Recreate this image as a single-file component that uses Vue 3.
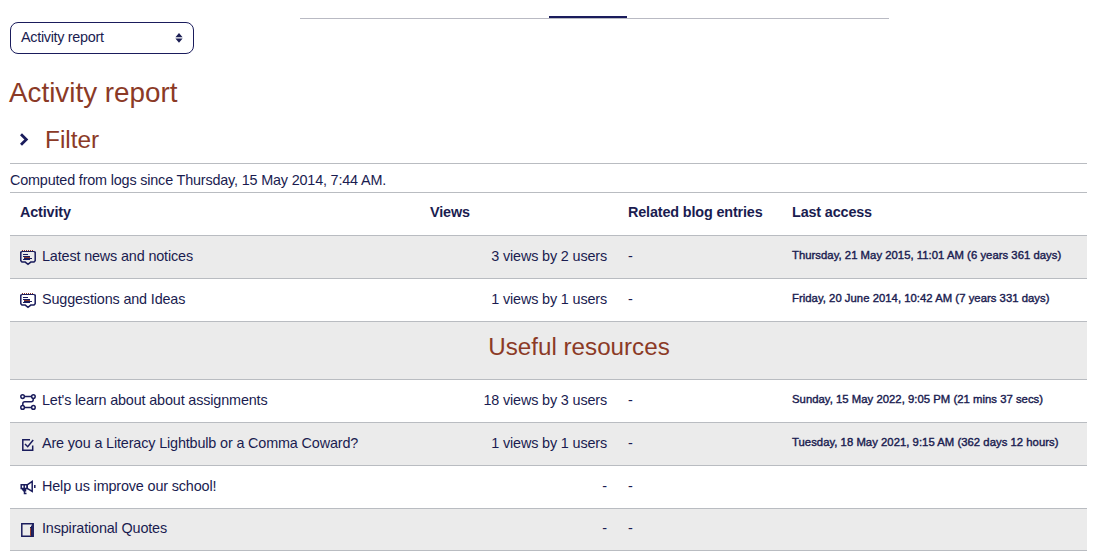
<script setup>
const rows = [
  { icon: 'forum', name: 'Latest news and notices', views: '3 views by 2 users', last: 'Thursday, 21 May 2015, 11:01 AM (6 years 361 days)' },
  { icon: 'forum', name: 'Suggestions and Ideas', views: '1 views by 1 users', last: 'Friday, 20 June 2014, 10:42 AM (7 years 331 days)' },
  { section: 'Useful resources' },
  { icon: 'path', name: "Let's learn about about assignments", views: '18 views by 3 users', last: 'Sunday, 15 May 2022, 9:05 PM (21 mins 37 secs)' },
  { icon: 'check', name: 'Are you a Literacy Lightbulb or a Comma Coward?', views: '1 views by 1 users', last: 'Tuesday, 18 May 2021, 9:15 AM (362 days 12 hours)' },
  { icon: 'horn', name: 'Help us improve our school!', views: '-', last: '' },
  { icon: 'book', name: 'Inspirational Quotes', views: '-', last: '' },
]
</script>

<template>
  <main class="page">
    <div class="tabs"><span class="active"></span></div>
    <div class="select">
      <span>Activity report</span>
      <svg width="8" height="10" viewBox="0 0 8 10"><path d="M4 0 7.6 4.3H.4zM.4 5.4h7.2L4 9.7z" fill="#1d2055" /></svg>
    </div>
    <h2>Activity report</h2>
    <div class="filter">
      <svg width="10" height="13" viewBox="0 0 10 13"><path d="M2 1.2 7.3 6.5 2 11.8" fill="none" stroke="#1a1c5c" stroke-width="2.8" /></svg>
      <h3>Filter</h3>
    </div>
    <p class="computed">Computed from logs since Thursday, 15 May 2014, 7:44 AM.</p>
    <table>
      <colgroup><col class="c1"><col class="c2"><col class="c3"><col class="c4"></colgroup>
      <thead>
        <tr><th>Activity</th><th>Views</th><th>Related blog entries</th><th>Last access</th></tr>
      </thead>
      <tbody>
        <tr v-for="(r, i) in rows" :key="i" :class="{ section: r.section, gray: i % 2 === 0, last: i === rows.length - 1 }">
          <td v-if="r.section" colspan="4"><h3>{{ r.section }}</h3></td>
          <template v-else>
            <td>
              <div class="activity">
                <svg class="icon" width="16" height="16" viewBox="0 0 16 16" fill="none" stroke="#1a1c5c" stroke-width="1.5">
                  <template v-if="r.icon === 'forum'">
                    <path d="M2 1.5h12" stroke-width="1" />
                    <path d="M1.8 1.4.8 2.4v8.3l1.2 1.4h3.2L8 14.3l2.8-2.2H14l1.2-1.4V2.4l-1-1" />
                    <path d="M2 .5h12" stroke="#8d3b2a" stroke-width="1" stroke-dasharray="1 1" />
                    <path d="M3 4.5h5M3 6.5h7M4 8.5h8M3 9.5h7" stroke-width="1" />
                    <path d="M4 7.5h6" stroke="#8d3b2a" stroke-width="1" />
                  </template>
                  <template v-else-if="r.icon === 'path'">
                    <circle cx="2.6" cy="2.6" r="1.8" /><circle cx="13.4" cy="2.6" r="1.8" />
                    <circle cx="2.6" cy="13.4" r="1.8" /><circle cx="13.4" cy="13.4" r="1.8" />
                    <path d="M4.5 2.5h7M13.2 4.4v1.3q0 2-2 2H4.8q-2 0-2 2v1.9M4.5 13.4h7" />
                  </template>
                  <template v-else-if="r.icon === 'check'">
                    <path d="M10 2.8H2.8v10.5h9.9V8.5M5 7l2.7 2.7L13.2 3" />
                  </template>
                  <template v-else-if="r.icon === 'horn'">
                    <path d="M7.2 4.9 12.2 1.5v10L7.2 8.4zM14.8 5v3M2.5 9.2h3v1.6H3.6zM4.5 11v2.4h2" />
                    <path d="M1.2 4.8h6v3.6h-6zM4.2 4.8v3.6" />
                  </template>
                  <template v-else>
                    <path d="M1.8 1.7h11.4v12.6H1.8zM12.8 2v12" />
                    <path d="M11.5 3.5v10.5M10.5 5v2" stroke-width="1" /><path d="M10.5 6v8" stroke="#9a442f" stroke-width="1" />
                  </template>
                </svg>
                <a>{{ r.name }}</a>
              </div>
            </td>
            <td class="views">{{ r.views }}</td>
            <td>-</td>
            <td class="date">{{ r.last }}</td>
          </template>
        </tr>
      </tbody>
    </table>
  </main>
</template>

<style>
body { background: #fff; overflow: hidden; }
</style>

<style scoped>
.page { box-sizing: border-box; width: 1096px; height: 553px; padding: 16px 9px 0 10px; font: 14.4px/20px "Liberation Sans", Arial, sans-serif; color: #1a1c50; background: #fff; }
.tabs { width: 589px; height: 2px; margin-left: 290px; border-bottom: 1px solid #b9bac3; }
.active { display: block; width: 78px; height: 2px; margin-left: 249px; background: #1a1c5c; }
.select { box-sizing: border-box; display: flex; align-items: center; justify-content: space-between; width: 184px; height: 32px; margin-top: 3px; padding: 0 10px 2px 10px; border: 1px solid #1a1c5c; border-radius: 8px; letter-spacing: -.3px; }
.select svg { margin-top: 2px; }
h2, h3 { margin: 0; font-weight: 400; color: #8b3a26; }
h2 { height: 33px; margin: 22px 0 0 -1px; font-size: 27.8px; line-height: 34px; }
.filter { box-sizing: border-box; display: flex; align-items: center; height: 55px; padding: 7px 0 0 9px; border-bottom: 1px solid #b9bcc1; }
.filter h3 { margin-left: 16px; font-size: 24.4px; line-height: 30px; }
.computed { height: 28px; margin: 0; line-height: 33px; white-space: nowrap; letter-spacing: -.175px; }
table { width: 1077px; table-layout: fixed; border-collapse: separate; border-spacing: 0; letter-spacing: -.15px; }
.c1 { width: 410px; } .c2 { width: 198px; } .c3 { width: 164px; } .c4 { width: 305px; }
tr { height: 43px; }
tr.section { height: 58px; }
th, td { box-sizing: border-box; padding: 10px 11px 0 10px; border-top: 1px solid #b9bcc1; text-align: left; vertical-align: top; line-height: 20px; white-space: nowrap; }
th { padding-top: 9px; }
.gray td { background: #ebebeb; }
.last td { border-bottom: 1px solid #b9bcc1; padding-top: 9px; }
.section h3 { padding: 1px 0 0 62px; font-size: 24.2px; line-height: 28px; text-align: center; letter-spacing: 0; }
.activity { display: flex; }
.icon { margin: 4px 6px 0 0; }
.views { text-align: right; }
td.date { font-size: 11.3px; line-height: 18px; letter-spacing: .03px; -webkit-text-stroke: .4px #1a1c50; }
</style>
